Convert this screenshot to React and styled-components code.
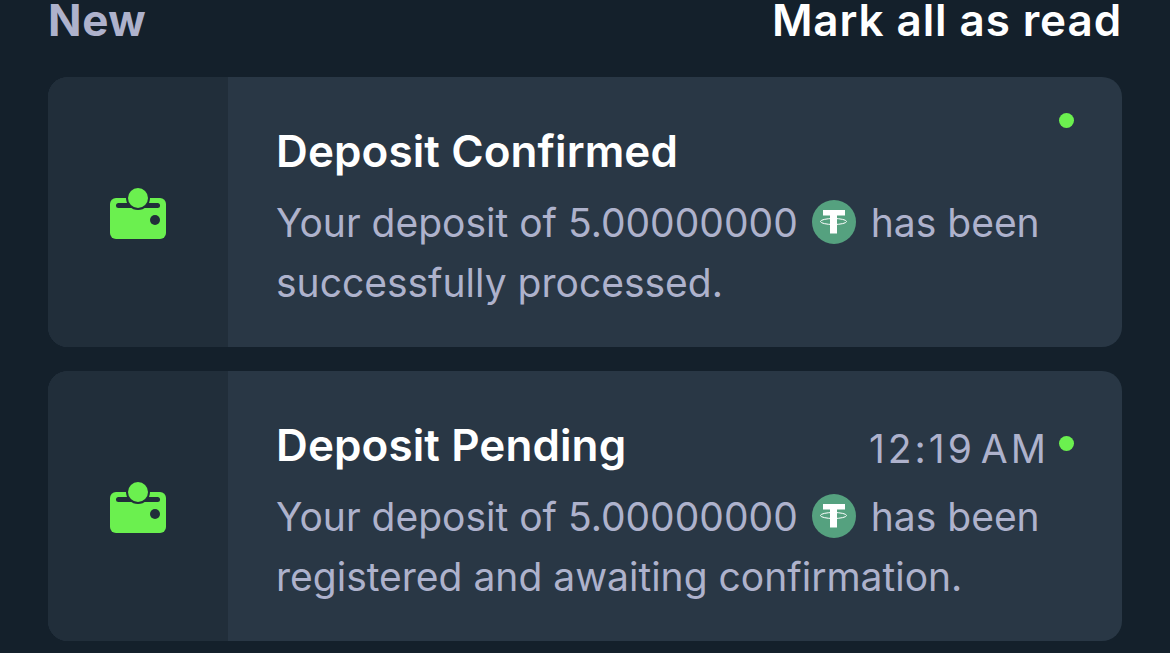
import styled, { createGlobalStyle } from "styled-components";

const GlobalStyle = createGlobalStyle`
    html, body {
        margin: 0;
        padding: 0;
        height: 653px;
        overflow: hidden;
        background-color: #14202b;
    }
`;

const notifications = [
    {
        title: "Deposit Confirmed",
        first: "Your deposit of 5.00000000",
        after: "has been",
        second: "successfully processed.",
    },
    {
        title: "Deposit Pending",
        time: "12:19 AM",
        first: "Your deposit of 5.00000000",
        after: "has been",
        second: "registered and awaiting confirmation.",
    },
];

function WalletIcon() {
    return (
        <svg width="56" height="51" viewBox="0 0 56 51">
            <rect x="0" y="10" width="56" height="41" rx="6" fill="#6bf04f" />
            <rect x="6" y="15" width="44" height="5" rx="2.5" fill="#212e3a" />
            <circle cx="28" cy="10" r="12" fill="#212e3a" />
            <circle cx="28" cy="10" r="10" fill="#6bf04f" />
            <circle cx="45" cy="32" r="5" fill="#212e3a" />
        </svg>
    );
}

function TetherIcon() {
    return (
        <Tether viewBox="0 0 44 44">
            <circle cx="22" cy="22" r="22" fill="#55a17f" />
            <path d="M11 10h22v5.500h-8v4.500h-7v-4.500h-7z" fill="#ffffff" />
            <path d="M18 19h7v14.500h-7z" fill="#ffffff" />
            <ellipse cx="21.500" cy="21.500" rx="13" ry="3" fill="none" stroke="#ffffff" strokeWidth="1" />
        </Tether>
    );
}

export default function App() {
    return (
        <Page>
            <GlobalStyle />
            <Header>
                <New>New</New>
                <MarkRead>Mark all as read</MarkRead>
            </Header>
            <List>
                {notifications.map((item) => (
                    <Card key={item.title}>
                        <IconColumn>
                            <WalletIcon />
                        </IconColumn>
                        <Content>
                            <TitleRow>
                                <Title>{item.title}</Title>
                                {item.time && <Time>{item.time}</Time>}
                            </TitleRow>
                            <Message>
                                <Line>
                                    {item.first}
                                    <TetherIcon />
                                    {item.after}
                                </Line>
                                <Line>{item.second}</Line>
                            </Message>
                            <Dot $withTime={Boolean(item.time)} />
                        </Content>
                    </Card>
                ))}
            </List>
        </Page>
    );
}

const Page = styled.div`
    width: 1074px;
    height: 653px;
    padding: 0 48px;
    overflow: hidden;
    font-family: "Inter", "Liberation Sans", sans-serif;
`;

const Header = styled.div`
    display: flex;
    justify-content: space-between;
    align-items: flex-start;
    height: 77px;
    box-sizing: border-box;
`;

const New = styled.div`
    font-size: 44px;
    line-height: 40px;
    font-weight: 700;
    color: #aeb2cc;
    letter-spacing: 0.6px;
`;

const MarkRead = styled.div`
    font-size: 44px;
    line-height: 40px;
    font-weight: 600;
    color: #ffffff;
    letter-spacing: 0.9px;
`;

const List = styled.div`
    display: flex;
    flex-direction: column;
    gap: 24px;
`;

const Card = styled.div`
    display: flex;
    height: 270px;
    border-radius: 20px;
    overflow: hidden;
    background-color: #293745;
`;

const IconColumn = styled.div`
    width: 180px;
    flex-shrink: 0;
    display: flex;
    align-items: center;
    justify-content: center;
    padding-top: 2px;
    box-sizing: border-box;
    background-color: #212e3a;
`;

const Content = styled.div`
    position: relative;
    flex: 1;
    padding: 46px 0 0 48px;
`;

const TitleRow = styled.div`
    display: flex;
    align-items: center;
    justify-content: space-between;
    height: 56px;
    padding-right: 73px;
`;

const Title = styled.div`
    font-size: 44px;
    font-weight: 600;
    color: #ffffff;
    letter-spacing: 0.1px;
`;

const Time = styled.div`
    position: relative;
    top: 3px;
    font-size: 39px;
    font-weight: 400;
    color: #aeb2cc;
    letter-spacing: 3px;
    word-spacing: -8px;
`;

const Message = styled.div`
    margin-top: 14px;
    font-size: 39px;
    line-height: 60px;
    color: #aeb2cc;
`;

const Line = styled.div`
    display: flex;
    align-items: center;
    white-space: nowrap;
`;

const Tether = styled.svg`
    width: 44px;
    height: 44px;
    margin: -2px 15px 0 14px;
`;

const Dot = styled.span`
    position: absolute;
    top: ${(props) => (props.$withTime ? "65px" : "36px")};
    right: 48px;
    width: 15px;
    height: 15px;
    border-radius: 50%;
    background-color: #6bf04f;
`;
